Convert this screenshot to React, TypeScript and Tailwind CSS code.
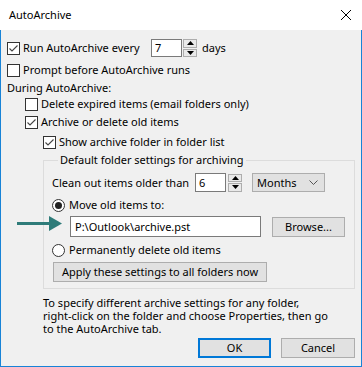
import React from 'react';

function Check({ checked }: { checked?: boolean }) {
  return (
    <span className="w-[13px] h-[13px] shrink-0 border border-[#333] bg-white flex items-center justify-center">
      {checked && (
        <svg width="11" height="11" viewBox="0 0 11 11">
          <path d="M1.5 5.5 L4 8 L9.5 2.5" stroke="#444" strokeWidth="1.1" fill="none" />
        </svg>
      )}
    </span>
  );
}

function Radio({ selected }: { selected?: boolean }) {
  return (
    <span className="w-[13px] h-[13px] shrink-0 rounded-full border border-[#333] bg-white flex items-center justify-center">
      {selected && <span className="w-[7px] h-[7px] rounded-full bg-[#222]" />}
    </span>
  );
}

function Spin() {
  return (
    <div className="w-[14px] h-[18px] flex flex-col gap-[1px]">
      <div className="flex-1 flex items-center justify-center border border-[#adadad] bg-[#e9e9e9]">
        <svg width="7" height="4" viewBox="0 0 7 4">
          <path d="M0 4 L3.5 0 L7 4Z" fill="#000" />
        </svg>
      </div>
      <div className="flex-1 flex items-center justify-center border border-[#adadad] bg-[#e9e9e9]">
        <svg width="7" height="4" viewBox="0 0 7 4">
          <path d="M0 0 L7 0 L3.5 4Z" fill="#000" />
        </svg>
      </div>
    </div>
  );
}

function Button({ children, width, primary }: { children: React.ReactNode; width: string; primary?: boolean }) {
  return (
    <div
      className={
        'h-[20px] flex items-center justify-center bg-[#e1e1e1] ' +
        width +
        (primary ? ' border-2 border-[#0078d7]' : ' border border-[#adadad]')
      }
    >
      {children}
    </div>
  );
}

export default function App() {
  return (
    <div className="w-[362px] h-[367px] bg-white text-[11px] leading-[16px] text-black whitespace-nowrap font-['Noto_Sans','Segoe_UI',sans-serif]">
      {/* Title bar */}
      <div className="h-[30px] flex items-center justify-between pl-[9px] pr-[11px]">
        <span>AutoArchive</span>
        <svg width="10" height="10" viewBox="0 0 10 10">
          <path d="M0 0 L10 10 M10 0 L0 10" stroke="#000" strokeWidth="1" />
        </svg>
      </div>

      {/* Body */}
      <div className="relative h-[337px] bg-[#f0f0f0] border-x border-b border-[#1883d7] flex flex-col">
        <div className="mt-[9px] ml-[6px] h-[18px] flex items-center">
          <Check checked />
          <span className="ml-[3px] w-[128px]">Run AutoArchive every</span>
          <div className="w-[31px] h-[18px] bg-white border border-[#7a7a7a] pl-[3px] flex items-center">7</div>
          <div className="ml-[1px]">
            <Spin />
          </div>
          <span className="ml-[5px]">days</span>
        </div>

        <div className="mt-[5px] ml-[6px] h-[16px] flex items-center">
          <Check />
          <span className="ml-[3px]">Prompt before AutoArchive runs</span>
        </div>

        <div className="mt-[2px] ml-[6px] h-[16px] flex items-center">During AutoArchive:</div>

        <div className="ml-[24px] h-[16px] flex items-center">
          <Check />
          <span className="ml-[3px]">Delete expired items (email folders only)</span>
        </div>

        <div className="mt-[2px] ml-[24px] h-[16px] flex items-center">
          <Check checked />
          <span className="ml-[3px]">Archive or delete old items</span>
        </div>

        <div className="mt-[4px] ml-[42px] h-[16px] flex items-center">
          <Check checked />
          <span className="ml-[3px]">Show archive folder in folder list</span>
        </div>

        <fieldset className="mt-[2px] ml-[42px] w-[312px] border border-[#dcdcdc] pl-[8px] pb-[6px]">
          <legend className="ml-[6px] px-[2px] leading-[16px]">Default folder settings for archiving</legend>

          <div className="mt-[5px] h-[19px] flex items-center">
            <span className="w-[143px]">Clean out items older than</span>
            <div className="w-[31px] h-[19px] bg-white border border-[#7a7a7a] pl-[3px] flex items-center">6</div>
            <div className="ml-[2px]">
              <Spin />
            </div>
            <div className="ml-[10px] w-[73px] h-[19px] bg-[#e1e1e1] border border-[#adadad] flex items-center justify-between pl-[4px] pr-[6px]">
              <span>Months</span>
              <svg width="9" height="5" viewBox="0 0 9 5">
                <path d="M0.5 0.5 L4.5 4.5 L8.5 0.5" stroke="#555" strokeWidth="1" fill="none" />
              </svg>
            </div>
          </div>

          <div className="mt-[5px] h-[16px] flex items-center">
            <Radio selected />
            <span className="ml-[4px]">Move old items to:</span>
          </div>

          <div className="mt-[3px] flex items-start">
            <div className="ml-[18px] w-[191px] h-[21px] bg-white border border-[#7a7a7a] pl-[4px] flex items-center">
              P:\Outlook\archive.pst
            </div>
            <div className="ml-[11px] mt-[1px]">
              <Button width="w-[73px]">Browse...</Button>
            </div>
          </div>

          <div className="mt-[5px] h-[16px] flex items-center">
            <Radio />
            <span className="ml-[4px]">Permanently delete old items</span>
          </div>

          <div className="mt-[4px] ml-[1px]">
            <Button width="w-[214px]">Apply these settings to all folders now</Button>
          </div>
        </fieldset>

        <p className="mt-[7px] ml-[42px] leading-[13px]">
          To specify different archive settings for any folder,
          <br />
          right-click on the folder and choose Properties, then go
          <br />
          to the AutoArchive tab.
        </p>

        <div className="mt-[3px] pr-[6px] flex justify-end gap-[10px]">
          <Button width="w-[73px]" primary>
            OK
          </Button>
          <Button width="w-[74px]">Cancel</Button>
        </div>

        {/* annotation arrow */}
        <svg className="absolute left-[16px] top-[186px]" width="45" height="15" viewBox="0 0 45 15">
          <rect x="0" y="6" width="34" height="3" fill="#2e7b79" />
          <path d="M32 0 L45 7.5 L32 15Z" fill="#2e7b79" />
        </svg>
      </div>
    </div>
  );
}
